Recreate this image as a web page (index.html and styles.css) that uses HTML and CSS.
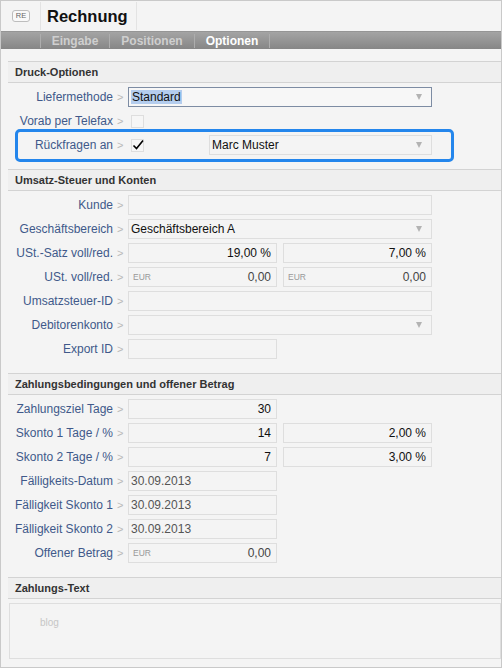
FILE: index.html
```html
<!DOCTYPE html>
<html lang="de">
<head>
    <meta charset="UTF-8">
    <title>Rechnung</title>
    <link rel="stylesheet" href="styles.css">
</head>
<body>
    <div class="window">
        <div class="titlebar">
            <div class="badge-cell"><span class="badge">RE</span></div>
            <div class="title">Rechnung</div>
        </div>

        <div class="tabs">
            <span class="tab tab-1">Eingabe</span>
            <span class="tab tab-2">Positionen</span>
            <span class="tab tab-3 active">Optionen</span>
        </div>

        <div class="content">
            <div class="section">
                <div class="section-head">Druck-Optionen</div>
                <div class="row">
                    <span class="label">Liefermethode</span><span class="gt">&gt;</span>
                    <div class="field full focus"><span class="selected">Standard</span><span class="arrow"></span></div>
                </div>
                <div class="row">
                    <span class="label">Vorab per Telefax</span><span class="gt">&gt;</span>
                    <span class="checkbox"></span>
                </div>
                <div class="row ring">
                    <span class="label">Rückfragen an</span><span class="gt">&gt;</span>
                    <div class="check-cell">
                        <span class="checkbox checked">
                            <svg width="14" height="14" viewBox="0 0 14 14"><path d="M2.5 7.5 L5.5 10.5 L12 2.5" fill="none" stroke="#000" stroke-width="1.6"/></svg>
                        </span>
                    </div>
                    <div class="field wide"><span>Marc Muster</span><span class="arrow"></span></div>
                </div>
            </div>

            <div class="section">
                <div class="section-head">Umsatz-Steuer und Konten</div>
                <div class="row">
                    <span class="label">Kunde</span><span class="gt">&gt;</span>
                    <div class="field full"></div>
                </div>
                <div class="row">
                    <span class="label">Geschäftsbereich</span><span class="gt">&gt;</span>
                    <div class="field full"><span>Geschäftsbereich A</span><span class="arrow"></span></div>
                </div>
                <div class="row">
                    <span class="label">USt.-Satz voll/red.</span><span class="gt">&gt;</span>
                    <div class="field half num"><span>19,00 %</span></div>
                    <div class="field half num"><span>7,00 %</span></div>
                </div>
                <div class="row">
                    <span class="label">USt. voll/red.</span><span class="gt">&gt;</span>
                    <div class="field half money"><span class="cur">EUR</span><span>0,00</span></div>
                    <div class="field half money"><span class="cur">EUR</span><span>0,00</span></div>
                </div>
                <div class="row">
                    <span class="label">Umsatzsteuer-ID</span><span class="gt">&gt;</span>
                    <div class="field full"></div>
                </div>
                <div class="row">
                    <span class="label">Debitorenkonto</span><span class="gt">&gt;</span>
                    <div class="field full"><span></span><span class="arrow"></span></div>
                </div>
                <div class="row">
                    <span class="label">Export ID</span><span class="gt">&gt;</span>
                    <div class="field half"></div>
                </div>
            </div>

            <div class="section">
                <div class="section-head">Zahlungsbedingungen und offener Betrag</div>
                <div class="row">
                    <span class="label">Zahlungsziel Tage</span><span class="gt">&gt;</span>
                    <div class="field half num"><span>30</span></div>
                </div>
                <div class="row">
                    <span class="label">Skonto 1 Tage / %</span><span class="gt">&gt;</span>
                    <div class="field half num"><span>14</span></div>
                    <div class="field half num"><span>2,00 %</span></div>
                </div>
                <div class="row">
                    <span class="label">Skonto 2 Tage / %</span><span class="gt">&gt;</span>
                    <div class="field half num"><span>7</span></div>
                    <div class="field half num"><span>3,00 %</span></div>
                </div>
                <div class="row">
                    <span class="label">Fälligkeits-Datum</span><span class="gt">&gt;</span>
                    <div class="field half readonly"><span>30.09.2013</span></div>
                </div>
                <div class="row">
                    <span class="label">Fälligkeit Skonto 1</span><span class="gt">&gt;</span>
                    <div class="field half readonly"><span>30.09.2013</span></div>
                </div>
                <div class="row">
                    <span class="label">Fälligkeit Skonto 2</span><span class="gt">&gt;</span>
                    <div class="field half readonly"><span>30.09.2013</span></div>
                </div>
                <div class="row">
                    <span class="label">Offener Betrag</span><span class="gt">&gt;</span>
                    <div class="field half money readonly"><span class="cur">EUR</span><span>0,00</span></div>
                </div>
            </div>

            <div class="section last">
                <div class="section-head">Zahlungs-Text</div>
                <div class="textbox"><span class="placeholder">blog</span></div>
            </div>
        </div>
    </div>
</body>
</html>
```

FILE: styles.css
```css
* {
    margin: 0;
    padding: 0;
    box-sizing: border-box;
}

body {
    font-family: "Liberation Sans", Arial, sans-serif;
    background-color: #f4f4f4;
}

.window {
    width: 502px;
    height: 668px;
    border: 1px solid #c9c9c9;
    background-color: #f4f4f4;
    overflow: hidden;
}

/* title bar */
.titlebar {
    height: 30px;
    display: flex;
}

.badge-cell {
    width: 40px;
    margin: 1px 0;
    border-right: 1px solid #e3e3e3;
    display: flex;
    align-items: center;
    padding-left: 11px;
}

.badge {
    width: 18px;
    height: 12px;
    border: 1px solid #bdbdbd;
    border-radius: 3px;
    background-color: #f9f9f9;
    font-size: 7.5px;
    line-height: 10px;
    text-align: center;
    color: #666;
}

.title {
    width: 96px;
    margin: 1px 0;
    border-right: 1px solid #e3e3e3;
    padding-left: 6px;
    font-size: 16.5px;
    font-weight: bold;
    line-height: 28px;
    color: #111;
}

/* tabs */
.tabs {
    height: 18px;
    display: flex;
    align-items: center;
    padding-left: 39px;
    background: linear-gradient(#a4a4a4, #868686);
    border-top: 1px solid #959595;
}

.tab {
    height: 14px;
    line-height: 14px;
    border-left: 1px solid #adadad;
    text-align: center;
    font-size: 12px;
    font-weight: bold;
    color: #cfcfcf;
}

.tab-1 { width: 69px; }
.tab-2 { width: 85px; }
.tab-3 { width: 76px; border-right: 1px solid #adadad; }

.tab.active {
    color: #fff;
}

/* sections */
.content {
    padding-top: 12px;
}

.section {
    margin-left: 7px;
    padding-bottom: 14px;
}

.section-head {
    height: 22px;
    line-height: 20px;
    padding-left: 7px;
    border-top: 1px solid #d3d3d3;
    border-bottom: 1px solid #d3d3d3;
    background-color: #efefef;
    font-size: 11px;
    font-weight: bold;
    color: #333;
}

.row {
    height: 20px;
    margin-top: 4px;
    display: flex;
    align-items: center;
}

.label {
    width: 105px;
    text-align: right;
    font-size: 12px;
    color: #40598a;
    white-space: nowrap;
}

.gt {
    width: 15px;
    padding-left: 4px;
    font-size: 11px;
    color: #b9b9b9;
}

.field {
    height: 20px;
    border: 1px solid #dedede;
    background-color: #f4f4f4;
    display: flex;
    align-items: center;
    justify-content: space-between;
    padding: 0 5px 0 2px;
    font-size: 12px;
    color: #111;
    white-space: nowrap;
}

.field.full { width: 304px; }
.field.half { width: 149px; margin-right: 6px; }
.field.wide { width: 223px; }

.field.num { justify-content: flex-end; }

.field.readonly { color: #555; }

.field.focus {
    border-color: #7d8ca3;
    background-color: #f7f7f7;
}

.selected {
    background-color: #b4cdee;
    padding: 0 1px;
}

.cur {
    font-size: 8.5px;
    color: #999;
    padding-left: 2px;
}

.money span:last-child {
    color: #444;
}

.arrow {
    width: 0;
    height: 0;
    margin-right: 4px;
    border-left: 3.5px solid transparent;
    border-right: 3.5px solid transparent;
    border-top: 6px solid #b3b3b3;
}

.checkbox {
    width: 13px;
    height: 13px;
    margin-left: 3px;
    border: 1px solid #dedede;
    background-color: #f6f6f6;
    position: relative;
}

.checkbox.checked svg {
    position: absolute;
    left: -1px;
    top: -2px;
}

.check-cell {
    width: 81px;
    display: flex;
}

/* focus ring round the Rückfragen row */
.ring {
    position: relative;
}

.ring::before {
    content: "";
    position: absolute;
    top: -6px;
    bottom: -7px;
    left: 7px;
    right: 47px;
    border: 3px solid #2486ec;
    border-radius: 5px;
}

.textbox {
    height: 56px;
    margin: 4px 0 0 1px;
    border: 1px solid #dedede;
    padding: 8px 0 0 30px;
}

.placeholder {
    font-size: 10px;
    color: #c6c6c6;
}
```
